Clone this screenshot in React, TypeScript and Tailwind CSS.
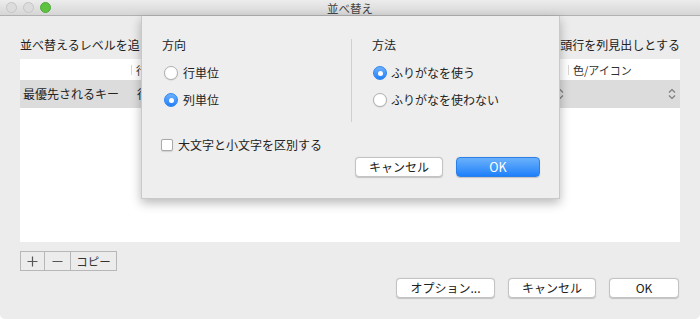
import React from "react";

const font = { fontFamily: '"Noto Sans CJK JP", "Noto Sans", sans-serif' };

function Radio({ checked }: { checked?: boolean }) {
  return checked ? (
    <span className="w-[14px] h-[14px] rounded-full bg-gradient-to-b from-[#6cb0fb] to-[#1f7ff8] border border-[#2f86ee] flex items-center justify-center shrink-0">
      <span className="w-[5px] h-[5px] rounded-full bg-white" />
    </span>
  ) : (
    <span className="w-[14px] h-[14px] rounded-full bg-white border border-[#b2b2b2] shadow-[0_0.5px_1px_rgba(0,0,0,0.15)] shrink-0" />
  );
}

function UpDown() {
  return (
    <svg width="8" height="12" viewBox="0 0 8 12" className="shrink-0">
      <path d="M1 4.5 L4 1.5 L7 4.5" fill="none" stroke="#7a7a7a" strokeWidth="1.1" />
      <path d="M1 7.5 L4 10.5 L7 7.5" fill="none" stroke="#7a7a7a" strokeWidth="1.1" />
    </svg>
  );
}

function MacButton({ children, w }: { children: React.ReactNode; w: string }) {
  return (
    <div
      className={`${w} h-[20px] bg-white border border-[#c3c3c3] rounded-[4px] shadow-[0_0.5px_1px_rgba(0,0,0,0.18)] flex items-center justify-center text-[12px] leading-[14px] text-[#222]`}
    >
      {children}
    </div>
  );
}

export default function App() {
  return (
    <div className="w-[700px] h-[319px] bg-white" style={font}>
      <div className="relative w-[700px] h-[319px] bg-[#ececec] rounded-b-[5px] overflow-hidden flex flex-col">
        {/* title bar */}
        <div className="h-[16px] shrink-0 bg-gradient-to-b from-[#ececec] to-[#d6d6d6] border-b border-[#b1b1b1] flex items-center relative">
          <div className="flex items-center gap-[6px] pl-[6px]">
            <span className="w-[11px] h-[11px] rounded-full bg-[#dcdcdc] border border-[#c6c6c6]" />
            <span className="w-[11px] h-[11px] rounded-full bg-[#dcdcdc] border border-[#c6c6c6]" />
            <span className="w-[11px] h-[11px] rounded-full bg-[#5ec241] border border-[#4ea83a]" />
          </div>
          <div className="absolute inset-0 flex items-center justify-center text-[11.5px] leading-[14px] text-[#444]">
            並べ替え
          </div>
        </div>

        {/* body */}
        <div className="flex-1 flex flex-col px-[20px]">
          <div className="h-[43px] flex items-end justify-between pb-[6px] text-[12px] leading-[16px] text-[#222]">
            <span className="whitespace-nowrap">並べ替えるレベルを追</span>
            <span className="whitespace-nowrap">頭行を列見出しとする</span>
          </div>

          <div className="h-[183px] bg-white flex flex-col">
            <div className="h-[21px] flex items-center text-[11px] leading-[14px] text-[#333]">
              <div className="w-[111px] h-full" />
              <div className="w-px h-[10px] bg-[#d6d6d6]" />
              <div className="flex-1 pl-[4px]">行</div>
              <div className="w-px h-[10px] bg-[#d6d6d6]" />
              <div className="w-[111px] pl-[4px]">色/アイコン</div>
            </div>
            <div className="h-[28px] bg-[#dcdcdc] flex items-center text-[12px] leading-[16px] text-[#222]">
              <div className="w-[111px] pl-[3px]">最優先されるキー</div>
              <div className="flex-1 pl-[6px]">行</div>
              <div className="w-[16px] flex justify-start"><UpDown /></div>
              <div className="w-[96px]" />
              <div className="w-[12px]"><UpDown /></div>
            </div>
          </div>

          <div className="mt-[9px] flex">
            <div className="h-[20px] flex border border-[#b7b7b7] bg-[#ececec] text-[#333]">
              <div className="w-[24px] flex items-center justify-center border-r border-[#b7b7b7]">
                <svg width="11" height="11" viewBox="0 0 11 11"><path d="M5.5 0.5 V10.5 M0.5 5.5 H10.5" stroke="#555" strokeWidth="1.2" /></svg>
              </div>
              <div className="w-[26px] flex items-center justify-center border-r border-[#b7b7b7]">
                <svg width="11" height="11" viewBox="0 0 11 11"><path d="M0.5 5.5 H10.5" stroke="#555" strokeWidth="1.2" /></svg>
              </div>
              <div className="w-[45px] flex items-center justify-center text-[11.5px] leading-[14px]">コピー</div>
            </div>
          </div>

          <div className="mt-[7px] flex justify-end gap-[13px] pr-[1px]">
            <MacButton w="w-[99px]">オプション...</MacButton>
            <MacButton w="w-[88px]">キャンセル</MacButton>
            <MacButton w="w-[70px]">OK</MacButton>
          </div>
        </div>

        {/* sheet */}
        <div className="absolute left-[141px] top-[16px] w-[419px] h-[183px] bg-[#eeeeee] border-x border-b border-[#c9c9c9] shadow-[0_4px_10px_rgba(0,0,0,0.28)] text-[#222] text-[12px] leading-[16px]">
          <div className="flex pt-[21px]">
            <div className="w-[209px] pl-[20px] flex flex-col">
              <div className="h-[16px]">方向</div>
              <div className="mt-[12px] flex items-center gap-[5px] pl-[2px] h-[16px]"><Radio /><span>行単位</span></div>
              <div className="mt-[11px] flex items-center gap-[5px] pl-[2px] h-[16px]"><Radio checked /><span>列単位</span></div>
            </div>
            <div className="w-px h-[83px] mt-[2px] bg-[#d0d0d0]" />
            <div className="flex-1 pl-[20px] flex flex-col">
              <div className="h-[16px]">方法</div>
              <div className="mt-[12px] flex items-center gap-[4px] pl-[1px] h-[16px]"><Radio checked /><span>ふりがなを使う</span></div>
              <div className="mt-[11px] flex items-center gap-[4px] pl-[1px] h-[16px]"><Radio /><span>ふりがなを使わない</span></div>
            </div>
          </div>
          <div className="mt-[15px] pl-[19px] flex items-center gap-[5px] h-[16px]">
            <span className="w-[12px] h-[12px] rounded-[2px] bg-white border border-[#a9a9a9] shadow-[0_0.5px_1px_rgba(0,0,0,0.12)]" />
            <span>大文字と小文字を区別する</span>
          </div>
          <div className="mt-[4px] flex justify-end gap-[13px] pr-[19px]">
            <MacButton w="w-[88px]">キャンセル</MacButton>
            <div className="w-[84px] h-[20px] rounded-[4px] bg-gradient-to-b from-[#69b1fb] to-[#1c80fa] border border-[#2c7fe8] shadow-[0_0.5px_1px_rgba(0,0,0,0.18)] flex items-center justify-center text-white text-[12.5px] leading-[14px]">
              OK
            </div>
          </div>
        </div>
      </div>
    </div>
  );
}
